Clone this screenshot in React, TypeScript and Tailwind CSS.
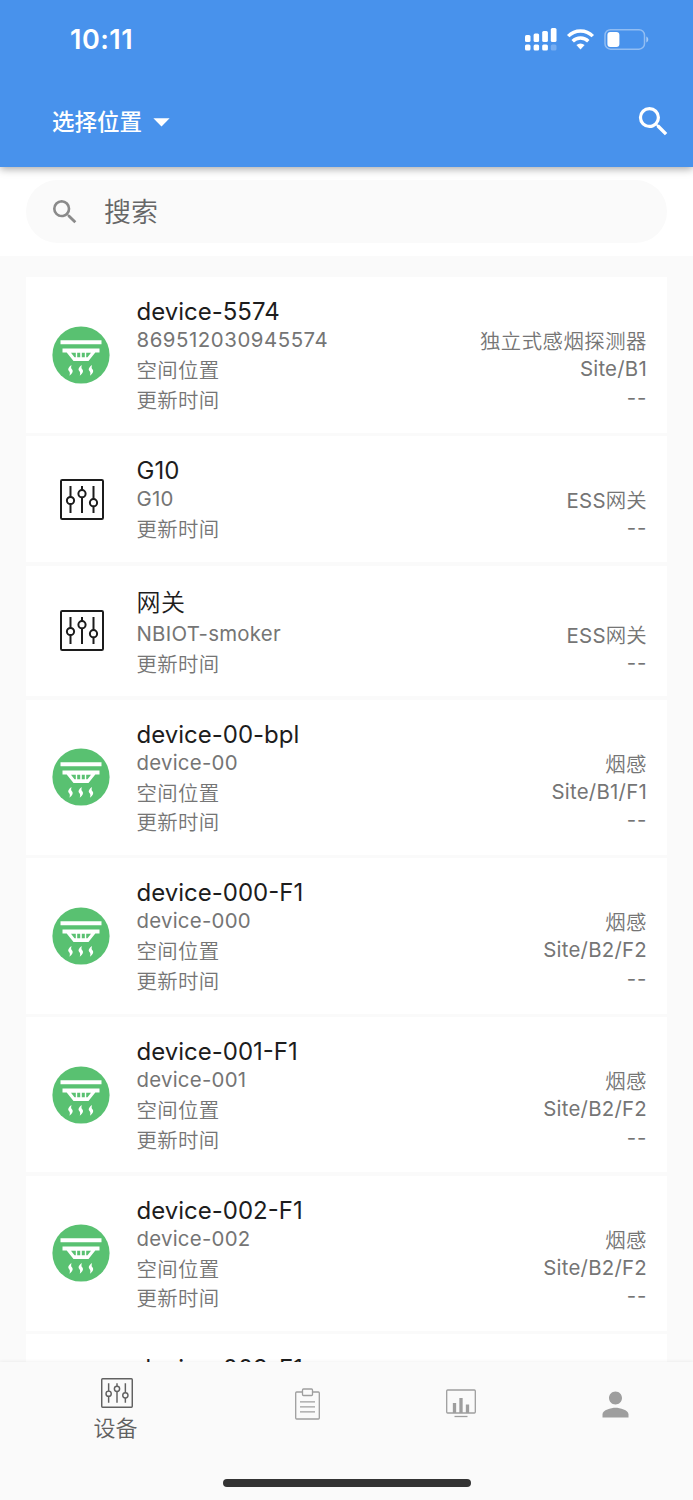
import { MdArrowDropDown, MdPerson, MdSearch } from "react-icons/md";
import clsx from "clsx";

type Device = {
  name: string;
  code: string;
  kind: string;
  site?: string;
  icon: "smoke" | "gateway";
};

const DEVICES: Device[] = [
  { name: "device-5574", code: "869512030945574", kind: "独立式感烟探测器", site: "Site/B1", icon: "smoke" },
  { name: "G10", code: "G10", kind: "ESS网关", icon: "gateway" },
  { name: "网关", code: "NBIOT-smoker", kind: "ESS网关", icon: "gateway" },
  { name: "device-00-bpl", code: "device-00", kind: "烟感", site: "Site/B1/F1", icon: "smoke" },
  { name: "device-000-F1", code: "device-000", kind: "烟感", site: "Site/B2/F2", icon: "smoke" },
  { name: "device-001-F1", code: "device-001", kind: "烟感", site: "Site/B2/F2", icon: "smoke" },
  { name: "device-002-F1", code: "device-002", kind: "烟感", site: "Site/B2/F2", icon: "smoke" },
  { name: "device-003-F1", code: "device-003", kind: "烟感", site: "Site/B2/F2", icon: "smoke" },
];

const isChinese = (text: string) => /[\u4e00-\u9fff]/.test(text);

function SmokeIcon() {
  return (
    <svg className="w-[58px] h-[58px]" viewBox="0 0 58 58">
      <circle cx="29" cy="29" r="28.6" fill="#59c171" />
      <g fill="#fff">
        <path d="M8.5 14.3h41v4h-41z" />
        <path d="M10.5 22.5h37v4h-4.2L36.5 35h-15l-6.8-8.5h-4.2z" />
        {[18.5, 28.8, 39].map((x) => (
          <path
            key={x}
            transform={`translate(${x} 44.5)`}
            d="M1-5.5C-1.8-3.3-3.3-1.3-1.3.8-.3 1.9-.6 3.3-1 5.3 2 2.8 3.2.6 1.2-1.4.4-2.3.6-3.7 1-5.5z"
          />
        ))}
      </g>
      <path fill="#59c171" d="M19 26.8h4.8v4.4h-1.3zM25.2 26.8h3v4.4h-3zM29.8 26.8h3v4.4h-3zM34.2 26.8H39l-3.5 4.4h-1.3z" />
    </svg>
  );
}

function SlidersIcon({ className }: { className?: string }) {
  return (
    <svg className={className} viewBox="0 0 44 41" fill="none" stroke="currentColor" strokeWidth="2">
      <rect x="1" y="1" width="42" height="39" rx="1.2" />
      <path d="M10.5 7v11M10.5 25v9M22 7v4M22 18.5V34M33.5 7v13M33.5 27.5V34" />
      <circle cx="10.5" cy="21.5" r="3.6" />
      <circle cx="22" cy="14.7" r="3.6" />
      <circle cx="33.5" cy="23.7" r="3.6" />
    </svg>
  );
}

function ClipboardIcon() {
  return (
    <svg className="w-[25px] h-[32px]" viewBox="0 0 25 32" fill="none" stroke="currentColor" strokeWidth="1.3">
      <path d="M7.5 4H1.7a1 1 0 0 0-1 1v25a1 1 0 0 0 1 1h21.6a1 1 0 0 0 1-1V5a1 1 0 0 0-1-1h-5.8" />
      <rect x="7.5" y="1" width="10" height="6.5" rx="1" />
      <path d="M5 13.8h15M5 18.8h15M5 23.8h15" />
    </svg>
  );
}

function ChartIcon() {
  return (
    <svg className="w-[30px] h-[29px]" viewBox="0 0 30 29" fill="none" stroke="currentColor" strokeWidth="1.3">
      <rect x=".7" y="1" width="28.6" height="23" rx="1" />
      <path d="M8.5 14v10M15 9v15M21.5 15.5V24" strokeWidth="3.3" />
      <path d="M8.5 27.5h13" />
    </svg>
  );
}

function StatusIcons() {
  return (
    <svg className="w-[125px] h-[26px]" viewBox="524 26 125 26" fill="#fff">
      <rect x="525" y="35" width="5.5" height="7" rx="1.5" />
      <rect x="533.6" y="33.5" width="5.5" height="8.5" rx="1.5" />
      <rect x="542.2" y="31" width="5.7" height="11" rx="1.5" />
      <rect x="550.8" y="28" width="5.7" height="14" rx="1.5" />
      <rect x="525" y="44.5" width="5.5" height="6" rx="1.5" />
      <rect x="533.6" y="44.5" width="5.5" height="6" rx="1.5" />
      <rect x="542.2" y="44.5" width="5.7" height="6" rx="1.5" />
      <rect x="550.8" y="44.5" width="5.7" height="6" rx="1.5" opacity=".25" />
      <g fill="none" stroke="#fff" strokeWidth="3.4">
        <path d="M568.2 36.2a17 17 0 0 1 24.600 0" />
        <path d="M572.7 41.2a11 11 0 0 1 15.600 0" />
      </g>
      <path d="M576.4 45a6 6 0 0 1 8.2 0l-4.1 4.4z" />
      <rect x="605" y="29.7" width="39.5" height="19.5" rx="5.5" fill="none" stroke="#fff" strokeWidth="1.5" opacity=".4" />
      <path d="M646.3 36.5c2.6 1 2.6 5 0 6z" opacity=".5" />
      <rect x="607.4" y="32" width="12" height="15" rx="3" />
    </svg>
  );
}

function DeviceCard({ device }: { device: Device }) {
  const cjkName = isChinese(device.name);
  return (
    <div
      className={clsx(
        "flex shrink-0 bg-white pl-[26px] pr-5",
        device.site ? "h-[155.3px]" : cjkName ? "h-[130.7px]" : "h-[126.2px]"
      )}
    >
      <div className="flex w-[58px] shrink-0 items-center justify-center">
        {device.icon === "smoke" ? <SmokeIcon /> : <SlidersIcon className="ml-[2px] h-[41px] w-[44px] text-[#1c1c1c]" />}
      </div>
      <div className="ml-[26.5px] flex-1 pt-5">
        <div
          className={clsx(
            "text-[24px] text-[#1d1d1d]",
            cjkName ? "font-[350] leading-[34px] tracking-[0.4px]" : "leading-[29px]"
          )}
        >
          {device.name}
        </div>
        <div className="flex justify-between text-[20.4px] tracking-[0.25px] text-[#757575]">
          <div>
            <div className={clsx("leading-[27px]", /^\d+$/.test(device.code) && "tracking-[0.55px]")}>
              {device.code}
            </div>
            <div className="mt-[3px] font-[350] leading-[29.5px] tracking-[0.4px]">
              {device.site && <div>空间位置</div>}
              <div>更新时间</div>
            </div>
          </div>
          <div className="text-right leading-[28.5px]">
            {isChinese(device.kind[0]) ? (
              <div className="pt-[2px] font-[350] leading-[27px] tracking-[0.5px]">{device.kind}</div>
            ) : (
              <div className="pt-[2px] leading-[27px]">
                ESS<span className="font-[350]">{device.kind.slice(3)}</span>
              </div>
            )}
            {device.site && <div>{device.site}</div>}
            <div className="tracking-[0.7px]">--</div>
          </div>
        </div>
      </div>
    </div>
  );
}

export default function App() {
  return (
    <div className="flex h-[1500px] w-[693px] flex-col overflow-hidden bg-[#fafafa] font-['Inter','Noto_Sans_CJK_SC',sans-serif]">
      <header className="z-10 h-[167px] shrink-0 bg-[#4892ec] text-white shadow-[0_2px_8px_rgba(0,0,0,0.35)]">
        <div className="flex h-[78px] items-center justify-between pl-[70px] pr-[44px]">
          <span className="text-[27px] font-semibold leading-none tracking-[0.5px]">10:11</span>
          <StatusIcons />
        </div>
        <div className="flex h-[87px] items-center justify-between pl-[52px] pr-5">
          <button className="flex items-center text-[22.5px] font-medium">
            选择位置
            <MdArrowDropDown className="h-[39px] w-[39px]" />
          </button>
          <MdSearch className="h-[39px] w-[39px]" />
        </div>
      </header>

      <div className="h-[89px] shrink-0 bg-white px-[26px] pt-[13px]">
        <div className="flex h-[63px] items-center rounded-full bg-[#fafafa] pl-[23px]">
          <MdSearch className="h-[32px] w-[32px] text-[#8a8a8a]" />
          <span className="ml-[23px] pt-px text-[27px] font-[350] leading-none text-[#666]">搜索</span>
        </div>
      </div>

      <main className="flex min-h-0 flex-1 flex-col gap-[3.4px] overflow-hidden px-[26px] pt-[21.3px]">
        {DEVICES.map((device) => (
          <DeviceCard key={device.name} device={device} />
        ))}
      </main>

      <nav className="z-10 flex h-[138px] shrink-0 flex-col items-center bg-[#fafafa] shadow-[0_-1px_3px_rgba(0,0,0,0.05)]">
        <div className="flex h-[84px] w-full text-[#9e9e9e]">
          <button className="flex w-[231px] flex-col items-center pt-4 text-[#616161]">
            <SlidersIcon className="ml-[2px] h-[30px] w-[32px]" />
            <span className="mt-[3px] text-[22px] font-[350] leading-[34px]">设备</span>
          </button>
          <button className="flex flex-1 items-center justify-center pb-px pr-px">
            <ClipboardIcon />
          </button>
          <button className="flex flex-1 items-center justify-center pb-[2px] pr-[2px]">
            <ChartIcon />
          </button>
          <button className="flex flex-1 items-center justify-center pr-px">
            <MdPerson className="h-[39px] w-[39px]" />
          </button>
        </div>
        <div className="mt-[33px] h-2 w-[248px] rounded-full bg-[#333]" />
      </nav>
    </div>
  );
}
